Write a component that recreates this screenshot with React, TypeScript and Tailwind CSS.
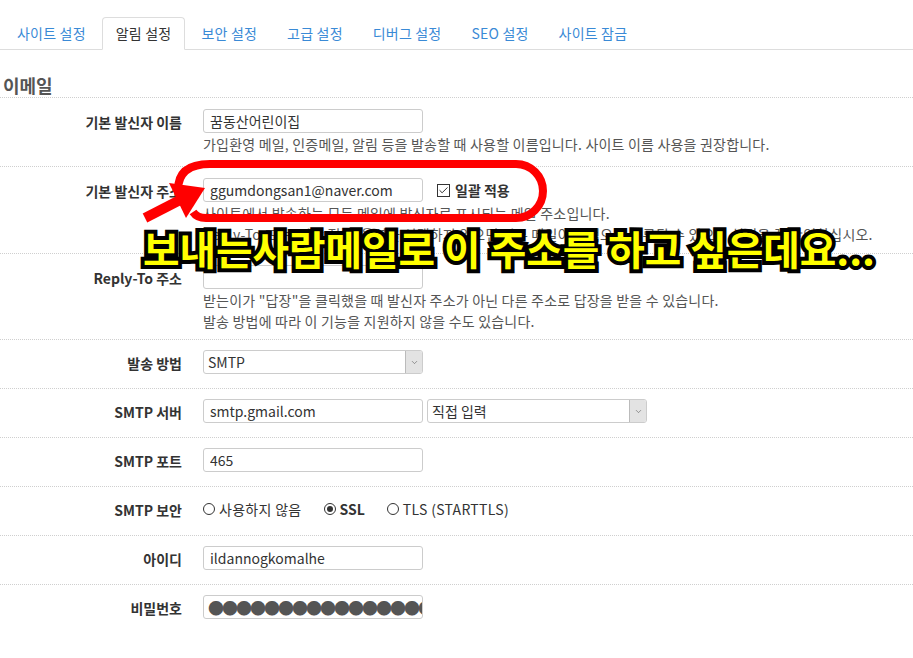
import React from "react";
import { Check, ChevronDown } from "lucide-react";

const tabs = ["사이트 설정", "알림 설정", "보안 설정", "고급 설정", "디버그 설정", "SEO 설정", "사이트 잠금"];

const inputCls =
  "h-[24px] w-[220px] rounded-[3px] border border-[#ccc] bg-white px-[6px] text-[14px] text-[#333] outline-none";

const Row = ({
  label,
  help,
  pad,
  children,
}: {
  label: string;
  help?: string[];
  pad?: string;
  children: React.ReactNode;
}) => (
  <div
    className={`flex border-b border-dotted border-[#cfcfcf] ${pad ?? (help ? "pt-[11px] pb-[9px]" : "pt-[10px] pb-[14px]")}`}
  >
    <div className="h-[24px] w-[182px] shrink-0 text-right text-[14px] font-bold leading-[26px] text-[#333]">
      {label}
    </div>
    <div className="ml-[21px] flex-1">
      <div className="flex h-[24px] items-center">{children}</div>
      {help && (
        <div className="mt-[1px] text-[14px] leading-[21px] tracking-[0.2px] text-[#555]">
          {help.map((h) => (
            <div key={h}>{h}</div>
          ))}
        </div>
      )}
    </div>
  </div>
);

const Select = ({ value, className = "" }: { value: string; className?: string }) => (
  <div className={`flex h-[24px] w-[220px] overflow-hidden rounded-[3px] border border-[#ccc] bg-white ${className}`}>
    <div className="flex-1 px-[4px] text-[14px] leading-[22px] text-[#333]">{value}</div>
    <div className="flex w-[17px] items-center justify-center border-l border-[#bbb] bg-[#e3e3e3]">
      <ChevronDown size={9} strokeWidth={1.5} className="text-[#555]" />
    </div>
  </div>
);

const Radio = ({ checked, label, bold }: { checked?: boolean; label: string; bold?: boolean }) => (
  <label className="mr-[22px] flex items-center text-[14px] text-[#333]">
    <span className="mr-[4px] flex h-[12px] w-[12px] items-center justify-center rounded-full border border-[#333] bg-white">
      {checked && <span className="h-[6px] w-[6px] rounded-full bg-[#333]" />}
    </span>
    <span className={bold ? "font-bold" : "tracking-[0.3px]"}>{label}</span>
  </label>
);

export default function App() {
  return (
    <div className="relative h-[658px] w-[913px] overflow-hidden bg-white pt-[17px] font-['Noto_Sans_CJK_KR','Noto_Sans',sans-serif]">
      <ul className="flex border-b border-[#ddd] pl-[3px]">
        {tabs.map((t, i) => (
          <li
            key={t}
            className={`-mb-px mr-[2px] rounded-t-[4px] border px-[13px] text-[14px] leading-[31px] tracking-[0.2px] ${
              i === 1 ? "border-[#ddd] border-b-white bg-white text-[#333]" : "border-transparent text-[#3a8ad6]"
            }`}
          >
            {t}
          </li>
        ))}
      </ul>

      <h2 className="mt-[25px] border-b border-dotted border-[#cfcfcf] pb-[2px] pl-[3px] text-[18px] font-bold leading-[20px] text-[#555]">
        이메일
      </h2>

      <Row
        label="기본 발신자 이름"
        pad="pt-[11px] pb-[11px]"
        help={["가입환영 메일, 인증메일, 알림 등을 발송할 때 사용할 이름입니다. 사이트 이름 사용을 권장합니다."]}
      >
        <input className={inputCls} readOnly defaultValue="꿈동산어린이집" />
      </Row>
      <Row
        label="기본 발신자 주소"
        pad="pt-[11px] pb-[8px]"
        help={[
          "사이트에서 발송하는 모든 메일에 발신자로 표시되는 메일 주소입니다.",
          "Reply-To 또는 '일괄 적용' 옵션을 선택하지 않으면 일부 메일이 스팸으로 분류될 수 있으니 설정을 꼭 확인하십시오.",
        ]}
      >
        <input className={inputCls} readOnly defaultValue="ggumdongsan1@naver.com" />
        <label className="ml-[14px] flex items-center text-[14px] font-bold text-[#333]">
          <span className="mr-[5px] flex h-[13px] w-[13px] items-center justify-center border border-[#333] bg-white">
            <Check size={11} strokeWidth={2} className="text-[#222]" />
          </span>
          일괄 적용
        </label>
      </Row>
      <Row
        label="Reply-To 주소"
        pad="pt-[11px] pb-[7px]"
        help={[
          "받는이가 \"답장\"을 클릭했을 때 발신자 주소가 아닌 다른 주소로 답장을 받을 수 있습니다.",
          "발송 방법에 따라 이 기능을 지원하지 않을 수도 있습니다.",
        ]}
      >
        <input className={inputCls} readOnly defaultValue="" />
      </Row>
      <Row label="발송 방법">
        <Select value="SMTP" />
      </Row>
      <Row label="SMTP 서버">
        <input className={inputCls} readOnly defaultValue="smtp.gmail.com" />
        <Select value="직접 입력" className="ml-[4px]" />
      </Row>
      <Row label="SMTP 포트">
        <input className={inputCls} readOnly defaultValue="465" />
      </Row>
      <Row label="SMTP 보안">
        <Radio label="사용하지 않음" />
        <Radio label="SSL" checked bold />
        <Radio label="TLS (STARTTLS)" />
      </Row>
      <Row label="아이디">
        <input className={inputCls} readOnly defaultValue="ildannogkomalhe" />
      </Row>
      <div className="flex pt-[10px]">
        <div className="h-[24px] w-[182px] shrink-0 text-right text-[14px] font-bold leading-[26px] text-[#333]">
          비밀번호
        </div>
        <div className="ml-[21px] h-[24px] w-[220px] overflow-hidden whitespace-nowrap rounded-[3px] border border-[#ccc] px-[4px] text-[16px] leading-[22px] tracking-[-2px] text-[#555]">
          ●●●●●●●●●●●●●●●●
        </div>
      </div>

      {/* annotation drawn over the page */}
      <svg className="pointer-events-none absolute inset-0" width="913" height="658" viewBox="0 0 913 658">
        <path
          d="M178 190 Q178 164 210 164 L516 164 A27 27 0 0 1 516 218 L206 218 Q197 218 193 212"
          fill="none"
          stroke="#ff0000"
          strokeWidth="8"
        />
        <line x1="145" y1="218" x2="182" y2="199" stroke="#ff0000" strokeWidth="10" />
        <polygon points="169,183 205,188 186,218" fill="#ff0000" />
      </svg>
      <div className="pointer-events-none absolute left-[143px] top-[223px] whitespace-nowrap text-[39.7px] font-bold leading-[50px] text-[#ffff00] [-webkit-text-stroke:8px_black] [paint-order:stroke_fill] [text-shadow:2px_2px_0_#000]">
        보내는사람메일로 이 주소를 하고 싶은데요...
      </div>
    </div>
  );
}
